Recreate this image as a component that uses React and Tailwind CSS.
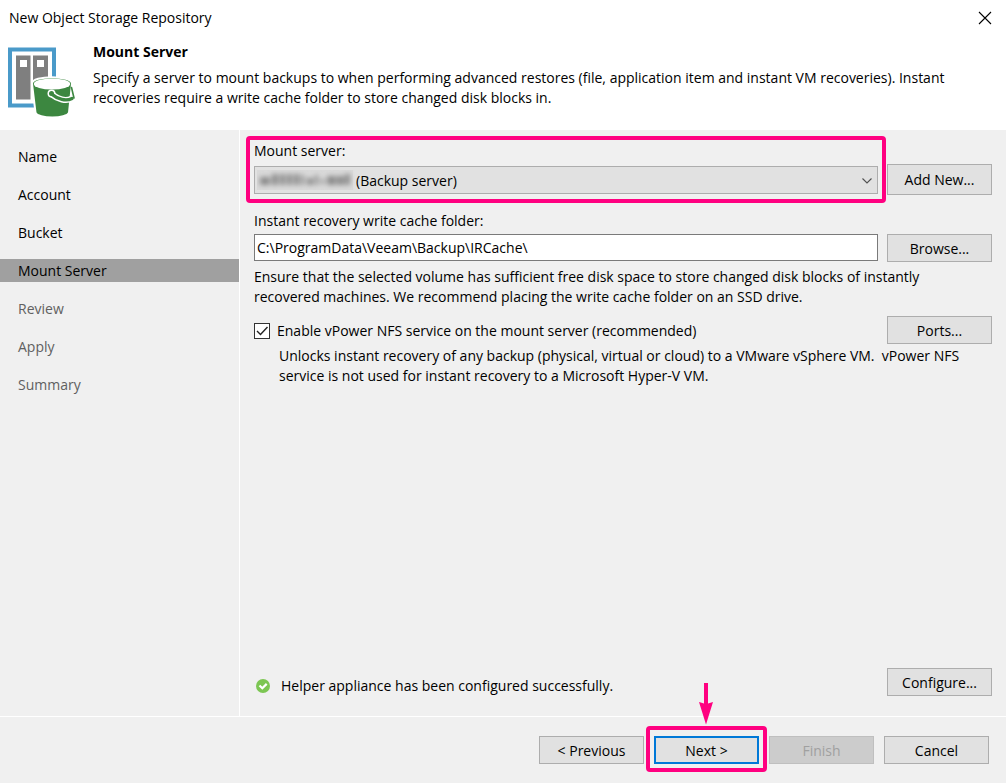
import React from "react";

const steps = [
  { name: "Name", state: "done" },
  { name: "Account", state: "done" },
  { name: "Bucket", state: "done" },
  { name: "Mount Server", state: "current" },
  { name: "Review", state: "todo" },
  { name: "Apply", state: "todo" },
  { name: "Summary", state: "todo" },
];

const stepStyles = {
  done: "text-black",
  current: "bg-[#a0a0a0] text-black",
  todo: "text-[#606060]",
};

function Button({ children, tall, primary, disabled }) {
  const look = disabled
    ? "border border-[#bfbfbf] bg-[#cccccc] text-[#a0a0a0]"
    : primary
      ? "border-2 border-[#0078d7] bg-[#e1e1e1]"
      : "border border-[#adadad] bg-[#e1e1e1]";
  return (
    <button
      type="button"
      disabled={disabled}
      className={`w-[105px] shrink-0 text-center ${tall ? "h-[31px]" : "h-7 pt-0.5"} ${look}`}
    >
      {children}
    </button>
  );
}

function RepositoryIcon() {
  return (
    <svg width="68" height="72" viewBox="0 0 68 72" className="shrink-0" aria-hidden="true">
      <rect x="2" y="2.5" width="44" height="56" fill="#fff" stroke="#4a9ac9" strokeWidth="4" />
      <rect x="8" y="8.500" width="14.500" height="44" fill="#7f7f7f" />
      <rect x="25" y="8.500" width="15" height="44" fill="#7f7f7f" />
      <rect x="12" y="13" width="7" height="7" fill="#fff" />
      <rect x="29" y="13" width="7" height="7" fill="#fff" />
      <path
        d="M24 36.500 C24 28 64 28 64 36.500 L61 65.500 C59 72 29.500 72 27.500 65.500 Z"
        fill="#3c8740"
        stroke="#fff"
        strokeWidth="2"
      />
      <ellipse cx="44" cy="37" rx="18.200" ry="5.600" fill="#fff" />
      <path
        d="M43.500 47 C50 52.500 58 54.500 64 51.500"
        fill="none"
        stroke="#fff"
        strokeWidth="6.400"
        strokeLinecap="round"
      />
      <circle cx="43.500" cy="46.500" r="4" fill="#fff" />
      <path d="M63.500 40.500 L66 51" stroke="#3c8740" strokeWidth="1.600" strokeLinecap="round" />
      <circle cx="43.500" cy="46.500" r="2.500" fill="#3c8740" />
      <path
        d="M43.500 47 C50 52.500 58 54.500 64 51.500"
        fill="none"
        stroke="#3c8740"
        strokeWidth="3.400"
        strokeLinecap="round"
      />
    </svg>
  );
}

function MaskedName() {
  return (
    <svg
      width="98"
      height="20"
      viewBox="0 0 98 20"
      className="pointer-events-none absolute top-1 left-[3px]"
      aria-hidden="true"
    >
      <defs>
        <filter id="soft" x="-10%" y="-40%" width="120%" height="180%">
          <feGaussianBlur stdDeviation="2.800" />
        </filter>
      </defs>
      <rect width="96" height="20" fill="#d9d9d9" />
      <g filter="url(#soft)" fill="#8c8c8c">
        <rect x="3" y="7" width="10" height="8" />
        <rect x="15" y="4" width="6" height="11" />
        <rect x="23" y="4" width="5" height="11" />
        <rect x="30" y="4" width="5" height="11" />
        <rect x="37" y="4" width="5" height="11" />
        <rect x="44" y="5" width="3" height="10" />
        <rect x="50" y="8" width="6" height="7" />
        <rect x="58" y="5" width="3" height="10" />
        <rect x="64" y="9" width="3" height="5" />
        <rect x="70" y="6" width="9" height="9" />
        <rect x="80" y="6" width="7" height="9" />
        <rect x="88" y="4" width="5" height="11" />
      </g>
    </svg>
  );
}

export default function App() {
  return (
    <div className="flex min-h-screen flex-col bg-[#f0f0f0] font-['Open_Sans','Noto_Sans',sans-serif] text-sm leading-5 text-black">
      <header className="bg-white pb-[11px]">
        <div className="flex items-center justify-between pt-2 pr-3 pl-[9px]">
          <h1>New Object Storage Repository</h1>
          <button type="button" aria-label="Close" className="flex size-[18px] items-center justify-center">
            <svg width="14" height="14" viewBox="0 0 14 14" aria-hidden="true">
              <path d="M1 1 L13 13 M13 1 L1 13" stroke="#000" strokeWidth="1.100" />
            </svg>
          </button>
        </div>
        <div className="flex gap-[17px] pt-[14px] pr-8 pl-2">
          <div className="pt-[5px]">
            <RepositoryIcon />
          </div>
          <div>
            <h2 className="mb-1.5 font-bold">Mount Server</h2>
            <p>
              Specify a server to mount backups to when performing advanced restores (file, application item and instant
              VM recoveries). Instant recoveries require a write cache folder to store changed disk blocks in.
            </p>
          </div>
        </div>
      </header>

      <div className="flex flex-1">
        <nav aria-label="Wizard steps" className="w-60 shrink-0 border-r border-white pt-[15px]">
          <ol className="flex flex-col gap-[15px]">
            {steps.map((step) => (
              <li
                key={step.name}
                aria-current={step.state === "current" ? "step" : undefined}
                className={`h-[23px] pl-[18px] leading-[23px] ${stepStyles[step.state]}`}
              >
                {step.name}
              </li>
            ))}
          </ol>
        </nav>

        <main className="flex flex-1 flex-col px-[14px] pt-[11px] pb-5">
          <div className="flex items-end gap-[9px]">
            <div className="relative flex-1 pb-px">
              <label htmlFor="mount-server" className="block">
                Mount server:
              </label>
              <div className="relative mt-[5px]">
                <select
                  id="mount-server"
                  className="block h-7 w-full appearance-none border border-[#adadad] bg-[#e1e1e1] pt-px pl-[101px]"
                >
                  <option>(Backup server)</option>
                </select>
                <MaskedName />
                <svg
                  width="10"
                  height="6"
                  viewBox="0 0 10 6"
                  className="pointer-events-none absolute top-3 right-[6px]"
                  aria-hidden="true"
                >
                  <path d="M0.500 0.500 L5 5 L9.500 0.500" fill="none" stroke="#505050" strokeWidth="1.100" />
                </svg>
              </div>
              <div className="pointer-events-none absolute -inset-x-2 -top-[5px] -bottom-2 rounded-sm border-4 border-[#ff0080]" />
            </div>
            <Button tall>Add New...</Button>
          </div>

          <label htmlFor="cache-folder" className="mt-4 block">
            Instant recovery write cache folder:
          </label>
          <div className="mt-[3px] flex gap-[9px]">
            <input
              id="cache-folder"
              type="text"
              defaultValue="C:\ProgramData\Veeam\Backup\IRCache\"
              className="h-[27px] min-w-0 flex-1 border border-[#7a7a7a] bg-white px-0.5"
            />
            <Button>Browse...</Button>
          </div>
          <p className="mt-[5px] pr-12">
            Ensure that the selected volume has sufficient free disk space to store changed disk blocks of instantly
            recovered machines. We recommend placing the write cache folder on an SSD drive.
          </p>

          <div className="mt-[9px] flex items-center justify-between">
            <div className="flex items-center pt-0.5">
              <span className="relative flex">
                <input
                  id="vpower"
                  type="checkbox"
                  defaultChecked
                  className="peer size-4 appearance-none border border-[#333333] bg-white"
                />
                <svg
                  width="16"
                  height="16"
                  viewBox="0 0 16 16"
                  className="pointer-events-none absolute inset-0 hidden peer-checked:block"
                  aria-hidden="true"
                >
                  <path d="M3 8 L6.500 11.500 L13.500 4" fill="none" stroke="#222" strokeWidth="1.400" />
                </svg>
              </span>
              <label htmlFor="vpower" className="pl-[7px]">
                Enable vPower NFS service on the mount server (recommended)
              </label>
            </div>
            <Button>Ports...</Button>
          </div>
          <p className="mt-0.5 pl-[25px]">
            Unlocks instant recovery of any backup (physical, virtual or cloud) to a VMware vSphere VM.&nbsp; vPower NFS
            service is not used for instant recovery to a Microsoft Hyper-V VM.
          </p>

          <div className="mt-auto flex items-center justify-between">
            <div role="status" className="flex items-center gap-[11px] pt-2 pl-0.5">
              <svg width="14" height="14" viewBox="0 0 14 14" aria-hidden="true">
                <circle cx="7" cy="7" r="7" fill="#7cc653" />
                <path d="M3.500 6.500 L6.300 9.300 L10.700 4.900" fill="none" stroke="#fff" strokeWidth="2.200" />
              </svg>
              <span>Helper appliance has been configured successfully.</span>
            </div>
            <Button>Configure...</Button>
          </div>
        </main>
      </div>

      <footer className="flex justify-end gap-[10px] border-t border-white pt-[19px] pr-[17px] pb-[19px]">
        <Button>&lt; Previous</Button>
        <div className="relative flex">
          <Button primary>Next &gt;</Button>
          <div className="pointer-events-none absolute -inset-x-2 -top-[10px] -bottom-2 rounded-sm border-4 border-[#ff0080]" />
          <svg
            width="14"
            height="42"
            viewBox="0 0 14 42"
            className="pointer-events-none absolute -top-[53px] left-[45px]"
            aria-hidden="true"
          >
            <path d="M5 0 H9 V20.500 L14 19 L7 41.500 L0 19 L5 20.500 Z" fill="#ff0080" />
          </svg>
        </div>
        <Button disabled>Finish</Button>
        <Button>Cancel</Button>
      </footer>
    </div>
  );
}
